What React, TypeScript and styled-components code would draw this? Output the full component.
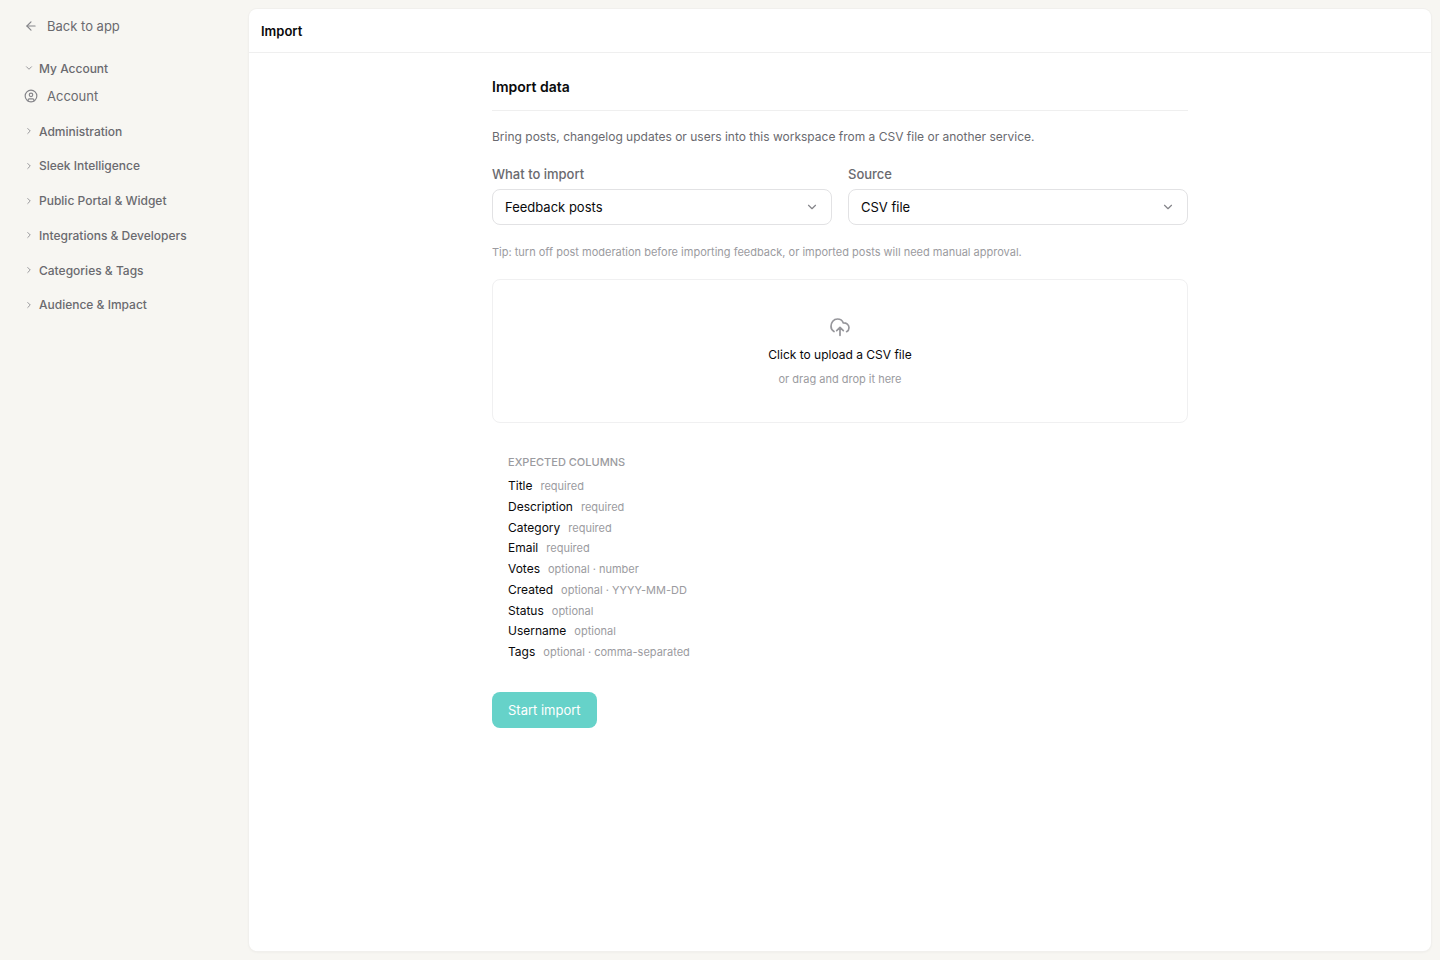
import React from "react";
import styled, { createGlobalStyle } from "styled-components";
import { ArrowLeft, ChevronDown, ChevronRight, CircleUser } from "lucide-react";

const GlobalStyle = createGlobalStyle`
  *, *::before, *::after { box-sizing: border-box; }
  body {
    margin: 0;
    background: #f7f6f2;
    color: #09090b;
    font-family: Inter, "Liberation Sans", sans-serif;
    font-size: 13px;
  }
  button, select, input { font: inherit; }
`;

const Page = styled.div`
  display: grid;
  grid-template-columns: 240px minmax(0, 1fr);
  min-height: 100vh;
`;

const Sidebar = styled.aside`
  padding: 12px 16px;
`;

const NavLink = styled.a`
  display: flex;
  align-items: center;
  gap: 9px;
  height: 28px;
  padding-left: 8px;
  color: #6a6a6f;
  font-size: 13px;
  text-decoration: none;
  svg { color: #85858a; }
`;

const Nav = styled.nav`
  margin-top: 14px;
`;

const Groups = styled.div`
  display: flex;
  flex-direction: column;
  justify-content: space-between;
  height: 202px;
  margin-top: 7px;
`;

const GroupButton = styled.button`
  display: flex;
  align-items: center;
  gap: 5px;
  width: 100%;
  height: 28px;
  padding: 0 8px;
  border: 0;
  background: none;
  color: #6a6a6f;
  font-size: 12px;
  font-weight: 500;
  text-align: left;
  cursor: pointer;
  svg { color: #85858a; }
`;

const Main = styled.main`
  display: flex;
  padding: 9px;
`;

const Panel = styled.div`
  flex: 1;
  min-width: 0;
  border-radius: 8px;
  background: #fff;
  box-shadow: 0 0 0 1px #f1f0ed, 0 1px 3px rgba(0, 0, 0, 0.06);
`;

const PanelHeader = styled.header`
  display: flex;
  align-items: center;
  height: 44px;
  padding: 0 12px;
  border-bottom: 1px solid #efefef;
`;

const PageTitle = styled.h1`
  margin: 0;
  font-size: 13px;
  font-weight: 600;
`;

const Content = styled.form`
  max-width: 696px;
  margin: 0 auto;
  padding: 24px 0;
`;

const SectionTitle = styled.h2`
  margin: 0;
  padding-bottom: 13px;
  border-bottom: 1px solid #efefef;
  font-size: 14px;
  font-weight: 600;
  line-height: 20px;
`;

const Intro = styled.p`
  margin: 17px 0 19px;
  color: #6a6a6f;
  font-size: 12px;
  line-height: 18px;
`;

const Fields = styled.div`
  display: grid;
  grid-template-columns: repeat(2, minmax(0, 1fr));
  gap: 16px;
`;

const Field = styled.div`
  display: grid;
  gap: 6px;
`;

const FieldLabel = styled.label`
  color: #6a6a6f;
  font-size: 13px;
  font-weight: 500;
  line-height: 18px;
`;

const SelectBox = styled.div`
  display: grid;
  align-items: center;
  > * { grid-area: 1 / 1; }
  svg {
    justify-self: end;
    margin-right: 13px;
    color: #85858a;
    pointer-events: none;
  }
`;

const Select = styled.select`
  appearance: none;
  width: 100%;
  height: 36px;
  padding: 0 36px 0 12px;
  border: 1px solid #e2e2e4;
  border-radius: 8px;
  background: #fff;
  color: #09090b;
  font-size: 13px;
`;

const Tip = styled.p`
  margin: 19px 0 18px;
  color: #9b9ba0;
  font-size: 11px;
  line-height: 17px;
`;

const DropZone = styled.label`
  display: flex;
  flex-direction: column;
  align-items: center;
  padding: 37px 16px 34px;
  border: 1px solid #f0f0f1;
  border-radius: 8px;
  cursor: pointer;
  svg { color: #96969b; }
`;

const FileInput = styled.input`
  position: absolute;
  width: 1px;
  height: 1px;
  opacity: 0;
`;

const DropTitle = styled.span`
  margin-top: 9px;
  font-size: 12px;
  line-height: 18px;
`;

const DropHint = styled.span`
  margin-top: 7px;
  color: #9b9ba0;
  font-size: 11px;
  line-height: 17px;
`;

const Columns = styled.section`
  padding: 31px 16px;
`;

const ColumnsTitle = styled.h3`
  margin: 0 0 7px;
  color: #9b9ba0;
  font-size: 11px;
  font-weight: 500;
  line-height: 16px;
  text-transform: uppercase;
`;

const ColumnList = styled.ul`
  display: flex;
  flex-direction: column;
  justify-content: space-between;
  height: 184px;
  margin: 0;
  padding: 0;
  list-style: none;
`;

const ColumnItem = styled.li`
  display: flex;
  align-items: baseline;
  gap: 8px;
  font-size: 12px;
  line-height: 18px;
`;

const ColumnNote = styled.span`
  color: #9b9ba0;
  font-size: 11px;
`;

const SubmitButton = styled.button`
  height: 36px;
  padding: 0 16px;
  border: 0;
  border-radius: 8px;
  background: #66d2c9;
  color: #fff;
  font-size: 13px;
`;

const groups = [
  "Administration",
  "Sleek Intelligence",
  "Public Portal & Widget",
  "Integrations & Developers",
  "Categories & Tags",
  "Audience & Impact",
];

const columns = [
  ["Title", "required"],
  ["Description", "required"],
  ["Category", "required"],
  ["Email", "required"],
  ["Votes", "optional · number"],
  ["Created", "optional · YYYY-MM-DD"],
  ["Status", "optional"],
  ["Username", "optional"],
  ["Tags", "optional · comma-separated"],
];

const UploadIcon = () => (
  <svg width="20" height="20" viewBox="0 0 20 20" fill="none" stroke="currentColor" strokeWidth="1.7" strokeLinecap="round" strokeLinejoin="round" aria-hidden="true">
    <path d="M4 14.5A5.8 5.8 0 0 1 1 9.3C1 5.4 3.6 2 7.5 2c2.8 0 4.8 1.4 5.8 3.8 3.2-.1 5.7 1.8 5.7 4.9 0 1.8-.9 3.2-2.4 4" />
    <path d="M10 18.3v-7.5M6.7 13.6l3.3-3.2 3.3 3.2" />
  </svg>
);

function SelectField({ id, label, options }: { id: string; label: string; options: string[] }) {
  return (
    <Field>
      <FieldLabel htmlFor={id}>{label}</FieldLabel>
      <SelectBox>
        <Select id={id}>
          {options.map((option) => (
            <option key={option}>{option}</option>
          ))}
        </Select>
        <ChevronDown size={14} strokeWidth={2} aria-hidden />
      </SelectBox>
    </Field>
  );
}

export default function App() {
  return (
    <Page>
      <GlobalStyle />
      <Sidebar>
        <NavLink href="#app">
          <ArrowLeft size={14} strokeWidth={2} aria-hidden />
          Back to app
        </NavLink>
        <Nav aria-label="Settings">
          <GroupButton type="button" aria-expanded="true">
            <ChevronDown size={10} aria-hidden />
            My Account
          </GroupButton>
          <NavLink href="#account">
            <CircleUser size={14} strokeWidth={2} aria-hidden />
            Account
          </NavLink>
          <Groups>
            {groups.map((group) => (
              <GroupButton key={group} type="button" aria-expanded="false">
                <ChevronRight size={10} aria-hidden />
                {group}
              </GroupButton>
            ))}
          </Groups>
        </Nav>
      </Sidebar>
      <Main>
        <Panel>
          <PanelHeader>
            <PageTitle>Import</PageTitle>
          </PanelHeader>
          <Content>
            <SectionTitle>Import data</SectionTitle>
            <Intro>Bring posts, changelog updates or users into this workspace from a CSV file or another service.</Intro>
            <Fields>
              <SelectField id="what" label="What to import" options={["Feedback posts"]} />
              <SelectField id="source" label="Source" options={["CSV file"]} />
            </Fields>
            <Tip>Tip: turn off post moderation before importing feedback, or imported posts will need manual approval.</Tip>
            <DropZone>
              <FileInput type="file" accept=".csv" />
              <UploadIcon />
              <DropTitle>Click to upload a CSV file</DropTitle>
              <DropHint>or drag and drop it here</DropHint>
            </DropZone>
            <Columns>
              <ColumnsTitle>Expected columns</ColumnsTitle>
              <ColumnList>
                {columns.map(([name, note]) => (
                  <ColumnItem key={name}>
                    {name}
                    <ColumnNote>{note}</ColumnNote>
                  </ColumnItem>
                ))}
              </ColumnList>
            </Columns>
            <SubmitButton type="button">Start import</SubmitButton>
          </Content>
        </Panel>
      </Main>
    </Page>
  );
}
